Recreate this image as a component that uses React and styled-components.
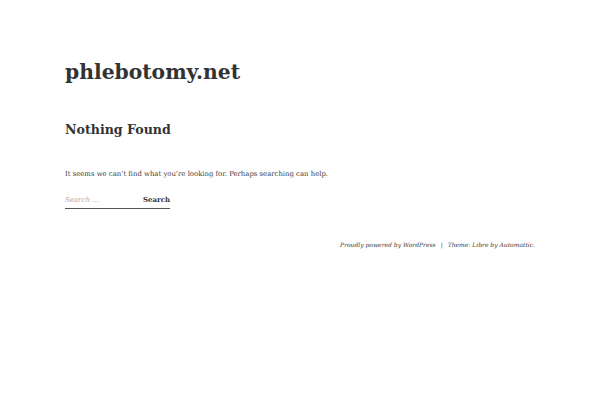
import styled, { createGlobalStyle } from "styled-components";

const Global = createGlobalStyle`
  html, body { margin: 0; padding: 0; background: #fff; }
  body { font-family: "DejaVu Serif", serif; color: #3a3a3a; }
`;

export default function App() {
  return (
    <>
      <Global />
      <Page>
        <Header>
          <SiteTitle>phlebotomy.net</SiteTitle>
        </Header>
        <Main>
          <PageTitle>Nothing Found</PageTitle>
          <Text>It seems we can’t find what you’re looking for. Perhaps searching can help.</Text>
          <SearchForm onSubmit={(e) => e.preventDefault()}>
            <SearchField placeholder="Search …" />
            <SearchButton type="submit">Search</SearchButton>
          </SearchForm>
        </Main>
        <Footer>
          <span>Proudly powered by WordPress</span>
          <Sep>|</Sep>
          <span>Theme: Libre by Automattic.</span>
        </Footer>
      </Page>
    </>
  );
}

const Page = styled.div`
  padding: 0 65px;
`;

const Header = styled.header`
  padding-top: 58px;
`;

const SiteTitle = styled.h1`
  margin: 0;
  font-size: 20.3px;
  font-weight: bold;
  line-height: 28px;
  color: #333;
`;

const Main = styled.main`
  padding-top: 34px;
`;

const PageTitle = styled.h2`
  margin: 0;
  font-size: 12.6px;
  font-weight: bold;
  line-height: 20px;
  color: #333;
`;

const Text = styled.p`
  margin: 28px 0 0;
  font-size: 6.9px;
  line-height: 12px;
`;

const SearchForm = styled.form`
  display: flex;
  align-items: flex-end;
  margin-top: 14px;
`;

const SearchField = styled.input`
  width: 78px;
  border: 0;
  border-bottom: 1px solid #555;
  padding: 0 0 2px;
  margin: 0;
  font-family: "DejaVu Serif", serif;
  font-size: 7px;
  line-height: 12px;
  background: transparent;
  outline: none;
  &::placeholder { color: #aaa; font-style: italic; }
`;

const SearchButton = styled.button`
  border: 0;
  border-bottom: 1px solid #555;
  background: transparent;
  padding: 0 0 2px;
  margin: 0;
  font-family: "DejaVu Serif", serif;
  font-size: 7px;
  font-weight: bold;
  line-height: 12px;
  color: #333;
`;

const Footer = styled.footer`
  display: flex;
  justify-content: flex-end;
  align-items: baseline;
  gap: 4px;
  margin-top: 30px;
  font-size: 6px;
  font-style: italic;
  line-height: 12px;
`;

const Sep = styled.span`
  padding: 0 1px;
`;
